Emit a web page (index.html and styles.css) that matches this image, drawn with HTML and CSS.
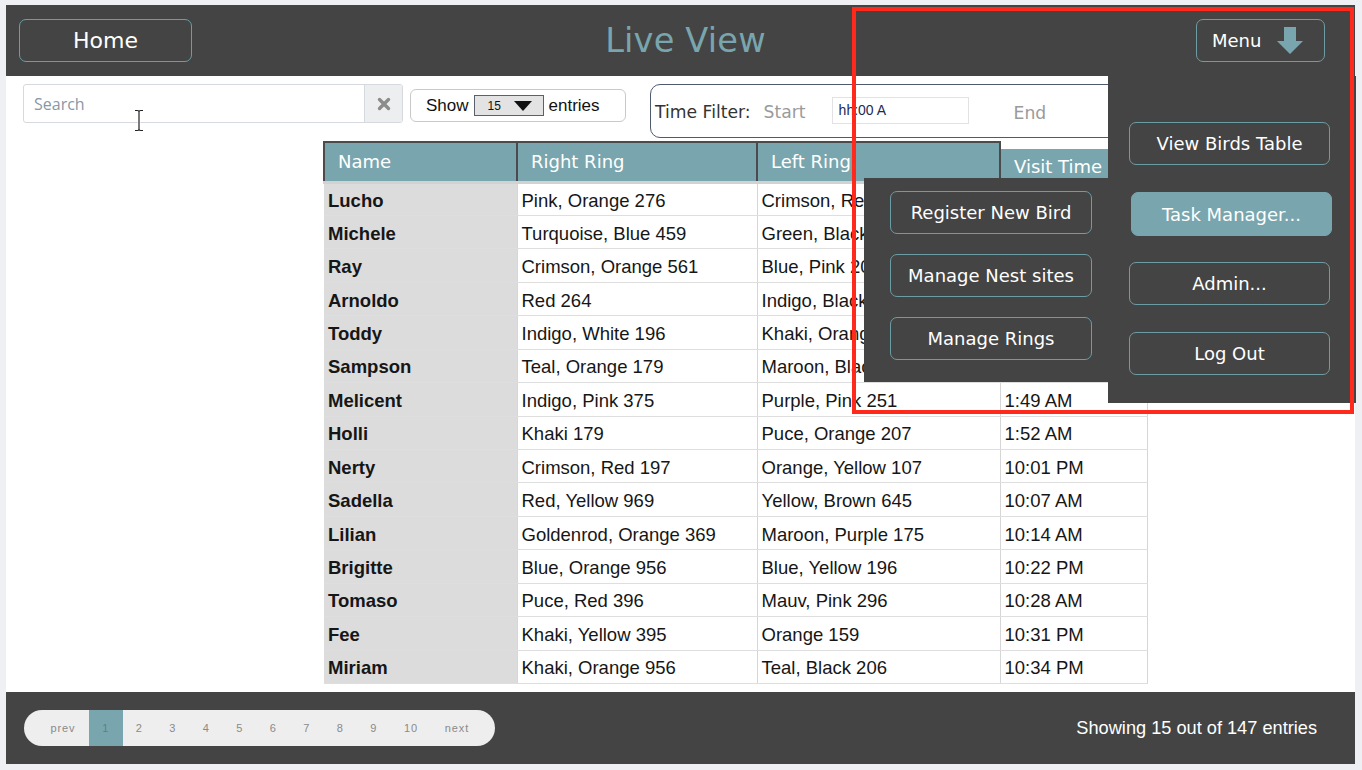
FILE: index.html
```html
<!DOCTYPE html>
<html>
<head>
<meta charset="utf-8">
<title>Live View</title>
<link rel="stylesheet" href="styles.css">
</head>
<body>
<div class="frame">
  <header class="topbar">
    <button class="btn-outline home">Home</button>
    <h1 class="title">Live View</h1>
    <button class="btn-outline menu-btn">
      <span>Menu</span>
      <svg class="menu-arrow" width="26" height="27" viewBox="0 0 26 27"><path d="M7 0h12v14h7L13 27 0 14h7z" fill="#79a6ae"/></svg>
    </button>
  </header>

  <main class="content">
    <div class="controls">
      <div class="search">
        <div class="search-input">Search</div>
        <div class="search-clear">
          <svg width="14" height="14" viewBox="0 0 14 14"><path d="M2.5 2.5l9 9M11.5 2.5l-9 9" stroke="#8c8c8c" stroke-width="3.4" stroke-linecap="round"/></svg>
        </div>
      </div>
      <div class="show-box">
        <span>Show</span>
        <div class="select"><span>15</span><svg width="18" height="10" viewBox="0 0 18 10"><path d="M0 0h18L9 10z" fill="#111"/></svg></div>
        <span>entries</span>
      </div>
      <div class="time-filter">
        <span class="tf-label">Time Filter:</span>
        <span class="tf-muted tf-start">Start</span>
        <div class="tf-input">hh:00 A</div>
        <span class="tf-muted tf-end">End</span>
      </div>
    </div>

    <table class="birds">
      <thead>
        <tr>
          <th class="c-name">Name</th>
          <th class="c-right">Right Ring</th>
          <th class="c-left">Left Ring</th>
          <th class="c-time">Visit Time</th>
        </tr>
      </thead>
      <tbody>
        <tr><td class="name">Lucho</td><td>Pink, Orange 276</td><td>Crimson, Red 342</td><td>1:02 AM</td></tr>
        <tr><td class="name">Michele</td><td>Turquoise, Blue 459</td><td>Green, Black 118</td><td>1:09 AM</td></tr>
        <tr><td class="name">Ray</td><td>Crimson, Orange 561</td><td>Blue, Pink 203</td><td>1:15 AM</td></tr>
        <tr><td class="name">Arnoldo</td><td>Red 264</td><td>Indigo, Black 547</td><td>1:22 AM</td></tr>
        <tr><td class="name">Toddy</td><td>Indigo, White 196</td><td>Khaki, Orange 831</td><td>1:31 AM</td></tr>
        <tr><td class="name">Sampson</td><td>Teal, Orange 179</td><td>Maroon, Black 412</td><td>1:40 AM</td></tr>
        <tr><td class="name">Melicent</td><td>Indigo, Pink 375</td><td>Purple, Pink 251</td><td>1:49 AM</td></tr>
        <tr><td class="name">Holli</td><td>Khaki 179</td><td>Puce, Orange 207</td><td>1:52 AM</td></tr>
        <tr><td class="name">Nerty</td><td>Crimson, Red 197</td><td>Orange, Yellow 107</td><td>10:01 PM</td></tr>
        <tr><td class="name">Sadella</td><td>Red, Yellow 969</td><td>Yellow, Brown 645</td><td>10:07 AM</td></tr>
        <tr><td class="name">Lilian</td><td>Goldenrod, Orange 369</td><td>Maroon, Purple 175</td><td>10:14 AM</td></tr>
        <tr><td class="name">Brigitte</td><td>Blue, Orange 956</td><td>Blue, Yellow 196</td><td>10:22 PM</td></tr>
        <tr><td class="name">Tomaso</td><td>Puce, Red 396</td><td>Mauv, Pink 296</td><td>10:28 AM</td></tr>
        <tr><td class="name">Fee</td><td>Khaki, Yellow 395</td><td>Orange 159</td><td>10:31 PM</td></tr>
        <tr><td class="name">Miriam</td><td>Khaki, Orange 956</td><td>Teal, Black 206</td><td>10:34 PM</td></tr>
      </tbody>
    </table>

    <svg class="cursor" width="12" height="23" viewBox="0 0 12 23"><path d="M2 1.5h2.5q1.5 0 1.5 1.5v17q0 1.5-1.5 1.5H2M10 1.5H7.5Q6 1.5 6 3M6 20q0 1.5 1.5 1.5H10" fill="none" stroke="#fff" stroke-width="2.6"/><path d="M2 1.5h2.5q1.5 0 1.5 1.5v17q0 1.5-1.5 1.5H2M10 1.5H7.5Q6 1.5 6 3M6 20q0 1.5 1.5 1.5H10" fill="none" stroke="#222" stroke-width="1.2"/></svg>
  </main>

  <footer class="footbar">
    <nav class="pager">
      <span class="pg prev">prev</span>
      <span class="pg num active">1</span>
      <span class="pg num">2</span>
      <span class="pg num">3</span>
      <span class="pg num">4</span>
      <span class="pg num">5</span>
      <span class="pg num">6</span>
      <span class="pg num">7</span>
      <span class="pg num">8</span>
      <span class="pg num">9</span>
      <span class="pg ten">10</span>
      <span class="pg next">next</span>
    </nav>
    <div class="count">Showing 15 out of 147 entries</div>
  </footer>

  <div class="menu-drop">
    <div class="menu-col menu-left">
      <button class="btn-outline mbtn">Register New Bird</button>
      <button class="btn-outline mbtn">Manage Nest sites</button>
      <button class="btn-outline mbtn">Manage Rings</button>
    </div>
    <div class="menu-col menu-right">
      <button class="btn-outline mbtn">View Birds Table</button>
      <button class="btn-outline mbtn active">Task Manager...</button>
      <button class="btn-outline mbtn">Admin...</button>
      <button class="btn-outline mbtn">Log Out</button>
    </div>
  </div>
</div>
<div class="annotation"></div>
</body>
</html>
```

FILE: styles.css
```css
* { box-sizing: border-box; }
html, body { margin: 0; padding: 0; }
body {
  position: relative;
  width: 1362px;
  height: 770px;
  overflow: hidden;
  background: #eff0f3;
  font-family: "Liberation Sans", Arial, sans-serif;
  color: #111;
}

.frame {
  position: relative;
  margin: 5px 0 0 6px;
  width: 1349px;
  height: 759px;
  display: flex;
  flex-direction: column;
  background: #fff;
}

/* ---------- header ---------- */
.topbar {
  height: 71px;
  flex: none;
  background: #444;
  display: grid;
  grid-template-columns: 1fr auto 1fr;
  align-items: center;
  padding: 0 30px 0 13px;
}
.btn-outline {
  background: transparent;
  border: 1.5px solid #6c9ca4;
  border-radius: 7px;
  color: #fff;
  font-family: "DejaVu Sans", Verdana, sans-serif;
  font-size: 18px;
  cursor: pointer;
  padding: 0;
}
.home {
  width: 173px;
  height: 43px;
  font-size: 22px;
}
.title {
  margin: 0 0 0 27px;
  font-family: "DejaVu Sans", Verdana, sans-serif;
  font-weight: normal;
  font-size: 33.6px;
  color: #79a6ae;
  letter-spacing: 0.2px;
}
.menu-btn {
  justify-self: end;
  width: 129px;
  height: 43px;
  display: flex;
  align-items: center;
  padding-left: 15px;
  font-size: 18px;
}
.menu-arrow { margin-left: 16px; }

/* ---------- content ---------- */
.content {
  position: relative;
  flex: 1;
}
.controls {
  display: flex;
  align-items: flex-start;
  padding: 8px 0 0 17px;
  height: 62px;
}
.search {
  width: 380px;
  height: 39px;
  display: flex;
  border: 1px solid #d6dadf;
  border-radius: 3px;
  overflow: hidden;
}
.search-input {
  flex: 1;
  padding-left: 10px;
  display: flex;
  align-items: center;
  font-family: "Open Sans", sans-serif;
  font-size: 16px;
  color: #8a97a4;
}
.search-clear {
  width: 38px;
  background: #eceeef;
  border-left: 1px solid #d6dadf;
  display: flex;
  align-items: center;
  justify-content: center;
}
.show-box {
  margin: 5px 0 0 7px;
  width: 216px;
  height: 33px;
  border: 1px solid #c9c9c9;
  border-radius: 6px;
  display: flex;
  align-items: center;
  padding-left: 15px;
  font-size: 17px;
  color: #111;
}
.select {
  margin: 0 5px 0 5px;
  width: 70px;
  height: 21px;
  background: #e3e3e3;
  border: 1px solid #59606e;
  display: flex;
  align-items: center;
  padding-left: 13px;
  font-size: 12px;
}
.select svg { margin-left: 13px; }
.time-filter {
  margin-left: 24px;
  width: 520px;
  height: 54px;
  border: 1.5px solid #4f5a6e;
  border-radius: 10px;
  display: flex;
  align-items: center;
  padding: 1px 0 0 4px;
  font-family: "DejaVu Sans", Verdana, sans-serif;
  font-size: 17.2px;
}
.tf-label { color: #333; }
.tf-muted { color: #9a9a9a; }
.tf-start { margin-left: 13px; }
.tf-input {
  margin: -3px 0 0 26px;
  width: 137px;
  height: 27px;
  border: 1px solid #e2e2e2;
  display: flex;
  align-items: center;
  padding-left: 6px;
  font-family: "Liberation Sans", Arial, sans-serif;
  font-size: 14px;
  color: #1d2a55;
}
.tf-end { margin-left: 45px; padding-top: 3px; }

/* ---------- table ---------- */
.birds {
  margin: 3px 0 0 317px;
  border-collapse: collapse;
  table-layout: fixed;
  width: 823px;
}
.birds th {
  height: 40px;
  background: #79a6ae;
  color: #fff;
  font-family: "DejaVu Sans", Verdana, sans-serif;
  font-weight: normal;
  font-size: 18px;
  text-align: left;
  padding: 0 0 0 13px;
  border: 2px solid #4b4b4b;
}
.birds th.c-name { width: 193px; }
.birds th.c-right { width: 240px; }
.birds th.c-left { width: 243px; }
.birds th.c-time {
  width: 147px;
  border-top: none;
  border-right: none;
  background: linear-gradient(#fff 0 7px, #79a6ae 7px);
  padding-top: 10px;
}
.birds tbody tr { height: 33.45px; }
.birds tbody tr:first-child td { border-top: 3px solid #d2d2d2; }
.birds td {
  padding: 3px 0 0 4px;
  font-size: 18.5px;
  color: #161616;
  border-bottom: 1px solid #dedede;
  border-right: 1px solid #d6d6d6;
  white-space: nowrap;
  overflow: hidden;
}
.birds td.name {
  background: #dcdcdc;
  font-weight: bold;
  padding-left: 4px;
}

.cursor {
  position: absolute;
  left: 127px;
  top: 33px;
}

/* ---------- footer ---------- */
.footbar {
  height: 72px;
  flex: none;
  background: #444;
  display: flex;
  align-items: center;
  justify-content: space-between;
  padding: 0 38px 0 18px;
}
.pager {
  display: flex;
  height: 36px;
  background: #eee;
  border-radius: 18px;
  overflow: hidden;
  font-size: 11px;
  color: #8a8a8a;
  letter-spacing: 0.9px;
}
.pg {
  display: flex;
  align-items: center;
  justify-content: center;
}
.prev { width: 65px; padding-left: 13px; }
.num { width: 33.5px; }
.ten { width: 41px; }
.next { width: 63px; padding-right: 12px; }
.pg.active { background: #79a6ae; color: #5d7f86; }
.count {
  color: #fff;
  font-size: 18.2px;
}

/* ---------- dropdown menu ---------- */
.menu-drop {
  position: absolute;
  top: 71px;
  right: -1px;
  display: flex;
  align-items: flex-start;
}
.menu-col {
  background: #444;
  display: flex;
  flex-direction: column;
}
.menu-left {
  margin-top: 102px;
  width: 244px;
  height: 204px;
  padding: 13px 0 0 26px;
  gap: 20px;
}
.menu-right {
  width: 248px;
  height: 327px;
  padding: 46px 0 0 21px;
  gap: 27px;
}
.mbtn {
  width: 202px;
  height: 43px;
}
.menu-right .mbtn { width: 201px; }
.mbtn.active {
  background: #79a6ae;
  border-color: #79a6ae;
  margin-left: 2px;
  height: 44px;
  margin-bottom: -1px;
}

/* ---------- annotation ---------- */
.annotation {
  position: absolute;
  left: 852px;
  top: 7px;
  width: 502px;
  height: 407px;
  border: 4px solid #ff2a1c;
  pointer-events: none;
}
```
